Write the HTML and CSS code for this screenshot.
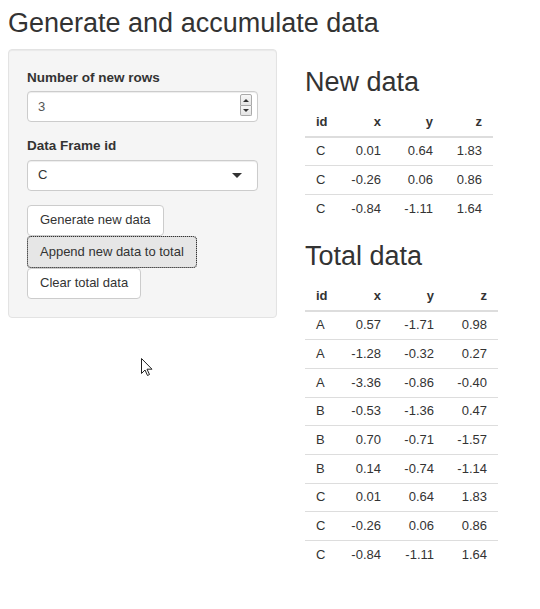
FILE: index.html
```html
<!DOCTYPE html>
<html lang="en">
<head>
<meta charset="utf-8">
<title>Generate and accumulate data</title>
<link rel="stylesheet" href="styles.css">
</head>
<body>
<div class="page">
  <h2 class="title">Generate and accumulate data</h2>
  <div class="row">
    <div class="sidebar">
      <div class="well">
        <div class="form-group">
          <label class="control-label" for="nrows">Number of new rows</label>
          <div class="num-wrap">
            <input id="nrows" class="form-control" type="text" value="3">
            <span class="spinner" aria-hidden="true">
              <span class="spin spin-up"><span class="tri tri-up"></span></span>
              <span class="spin spin-down"><span class="tri tri-down"></span></span>
            </span>
          </div>
        </div>
        <div class="form-group">
          <label class="control-label">Data Frame id</label>
          <div class="select-box">
            <span class="select-value">C</span>
            <span class="caret"></span>
          </div>
        </div>
        <div class="btn-stack">
          <button class="btn" type="button">Generate new data</button>
          <button class="btn btn-active" type="button">Append new data to total</button>
          <button class="btn" type="button">Clear total data</button>
        </div>
      </div>
    </div>

    <div class="main">
      <h2 class="section">New data</h2>
      <table class="data-table tbl-new">
        <colgroup>
          <col class="col-id"><col class="col-x"><col class="col-y"><col class="col-z">
        </colgroup>
        <thead>
          <tr><th class="left">id</th><th>x</th><th>y</th><th>z</th></tr>
        </thead>
        <tbody>
          <tr><td class="left">C</td><td>0.01</td><td>0.64</td><td>1.83</td></tr>
          <tr><td class="left">C</td><td>-0.26</td><td>0.06</td><td>0.86</td></tr>
          <tr><td class="left">C</td><td>-0.84</td><td>-1.11</td><td>1.64</td></tr>
        </tbody>
      </table>

      <h2 class="section">Total data</h2>
      <table class="data-table tbl-total">
        <colgroup>
          <col class="col-id"><col class="col-x"><col class="col-y"><col class="col-z">
        </colgroup>
        <thead>
          <tr><th class="left">id</th><th>x</th><th>y</th><th>z</th></tr>
        </thead>
        <tbody>
          <tr><td class="left">A</td><td>0.57</td><td>-1.71</td><td>0.98</td></tr>
          <tr><td class="left">A</td><td>-1.28</td><td>-0.32</td><td>0.27</td></tr>
          <tr><td class="left">A</td><td>-3.36</td><td>-0.86</td><td>-0.40</td></tr>
          <tr><td class="left">B</td><td>-0.53</td><td>-1.36</td><td>0.47</td></tr>
          <tr><td class="left">B</td><td>0.70</td><td>-0.71</td><td>-1.57</td></tr>
          <tr><td class="left">B</td><td>0.14</td><td>-0.74</td><td>-1.14</td></tr>
          <tr><td class="left">C</td><td>0.01</td><td>0.64</td><td>1.83</td></tr>
          <tr><td class="left">C</td><td>-0.26</td><td>0.06</td><td>0.86</td></tr>
          <tr><td class="left">C</td><td>-0.84</td><td>-1.11</td><td>1.64</td></tr>
        </tbody>
      </table>
    </div>
  </div>

  <svg class="pointer" width="12" height="19" viewBox="0 0 12 19" aria-hidden="true">
    <path d="M0.5 0.5 L0.5 15.5 L4 12 L6.5 17.5 L8.5 16.5 L6 11.2 L11 11.2 Z" fill="#fff" stroke="#222" stroke-width="1" stroke-linejoin="round"/>
  </svg>
</div>
</body>
</html>
```

FILE: styles.css
```css
* {
  box-sizing: border-box;
}

html, body {
  margin: 0;
  padding: 0;
  background: #fff;
}

body {
  font-family: "Liberation Sans", Arial, Helvetica, sans-serif;
  font-size: 13px;
  line-height: 1.42857;
  color: #333;
}

.page {
  position: relative;
  padding: 9px 8px 0;
  min-height: 609px;
}

h2 {
  font-family: "Liberation Sans", Arial, Helvetica, sans-serif;
  font-weight: 400;
  font-size: 27px;
  line-height: 1.1;
  color: #333;
}

.title {
  margin: 0 0 10px;
}

.row {
  display: flex;
  align-items: flex-start;
  gap: 28px;
}

.sidebar {
  width: 269px;
  flex: none;
}

.main {
  flex: 1;
}

/* side panel */
.well {
  background: #f5f5f5;
  border: 1px solid #e3e3e3;
  border-radius: 4px;
  box-shadow: inset 0 1px 1px rgba(0, 0, 0, 0.05);
  padding: 18px;
}

.form-group {
  margin-bottom: 14px;
}

.control-label {
  display: block;
  font-weight: 700;
  font-size: 13.5px;
  margin-bottom: 4.5px;
}

.form-control,
.select-box {
  display: block;
  width: 100%;
  height: 30.5px;
  padding: 0 10px;
  font-family: inherit;
  font-size: 13px;
  color: #555;
  background: #fff;
  border: 1px solid #ccc;
  border-radius: 4px;
  box-shadow: inset 0 1px 1px rgba(0, 0, 0, 0.075);
  outline: none;
}

.num-wrap {
  position: relative;
}

/* number spinner drawn over the right end of the input */
.spinner {
  position: absolute;
  right: 6px;
  top: 3px;
  width: 12px;
  height: 22px;
  display: flex;
  flex-direction: column;
}

.spin {
  flex: 1;
  border: 1px solid #a9a9a9;
  background: linear-gradient(#f7f7f7, #e4e4e4);
  display: flex;
  align-items: center;
  justify-content: center;
}

.spin-up {
  border-radius: 2px 2px 0 0;
}

.spin-down {
  border-top: none;
  border-radius: 0 0 2px 2px;
}

.tri {
  width: 0;
  height: 0;
  border-left: 3px solid transparent;
  border-right: 3px solid transparent;
}

.tri-up {
  border-bottom: 3px solid #333;
}

.tri-down {
  border-top: 3px solid #333;
}

.select-box {
  display: flex;
  align-items: center;
  justify-content: space-between;
  height: 31px;
  color: #333;
  padding: 0 15px 0 10px;
}

.caret {
  width: 0;
  height: 0;
  border-left: 5px solid transparent;
  border-right: 5px solid transparent;
  border-top: 5px solid #333;
}

/* action buttons */
.btn-stack {
  display: flex;
  flex-direction: column;
  align-items: flex-start;
}

.btn {
  font-family: inherit;
  font-size: 13px;
  line-height: 18px;
  padding: 5.7px 12px;
  color: #333;
  background: #fff;
  border: 1px solid #ccc;
  border-radius: 4px;
  cursor: pointer;
}

.btn-active {
  background: #e6e6e6;
  border-color: #adadad;
  outline: 1px dotted #333;
  outline-offset: -1px;
}

/* result tables */
.section {
  margin: 19.5px 0 10px;
}

.data-table {
  border-collapse: collapse;
  border-spacing: 0;
  table-layout: fixed;
  margin-bottom: 18px;
  font-size: 13px;
}

.data-table th,
.data-table td {
  padding: 4.85px 11px;
  line-height: 18px;
  text-align: right;
  white-space: nowrap;
}

.data-table th {
  font-weight: 700;
  border-bottom: 2px solid #ddd;
}

.data-table td {
  border-top: 1px solid #ddd;
}

.data-table .left {
  text-align: left;
}

.tbl-new {
  width: 188px;
}

.tbl-new .col-id { width: 33px; }
.tbl-new .col-x { width: 54px; }
.tbl-new .col-y { width: 52px; }
.tbl-new .col-z { width: 49px; }

.tbl-total {
  width: 193px;
}

.tbl-total .col-id { width: 33px; }
.tbl-total .col-x { width: 54px; }
.tbl-total .col-y { width: 53px; }
.tbl-total .col-z { width: 53px; }

/* mouse pointer resting over the page */
.pointer {
  position: absolute;
  left: 141px;
  top: 358px;
}
```
